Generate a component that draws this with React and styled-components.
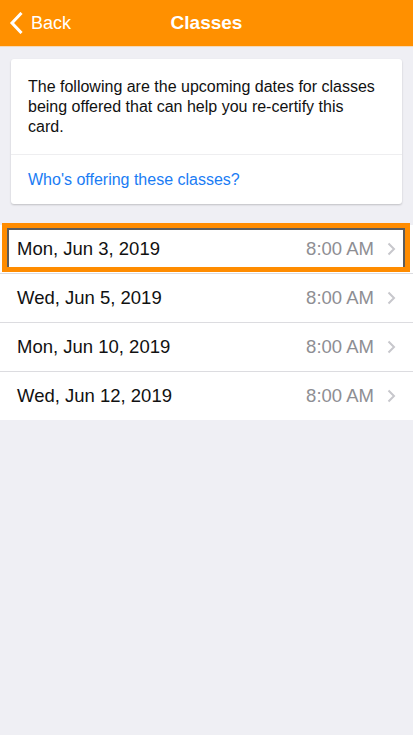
import styled, { createGlobalStyle } from "styled-components";

const classes = [
  { date: "Mon, Jun 3, 2019", time: "8:00 AM", highlighted: true },
  { date: "Wed, Jun 5, 2019", time: "8:00 AM" },
  { date: "Mon, Jun 10, 2019", time: "8:00 AM" },
  { date: "Wed, Jun 12, 2019", time: "8:00 AM" },
];

export default function App() {
  return (
    <>
      <GlobalStyle />
      <Screen>
        <NavBar>
          <BackButton>
            <svg width="14" height="22" viewBox="0 0 14 22">
              <path
                d="M11.5 2 L3 11 L11.5 20"
                fill="none"
                stroke="#fff"
                strokeWidth="3"
                strokeLinecap="square"
              />
            </svg>
            Back
          </BackButton>
          <Title>Classes</Title>
        </NavBar>

        <Card>
          <CardText>
            The following are the upcoming dates for classes being offered that
            can help you re-certify this card.
          </CardText>
          <CardLink>Who's offering these classes?</CardLink>
        </Card>

        <List>
          {classes.map((c) => (
            <Row key={c.date} $highlighted={c.highlighted}>
              <DateText>{c.date}</DateText>
              <TimeText>{c.time}</TimeText>
              <svg width="9" height="14" viewBox="0 0 9 14">
                <path
                  d="M1.5 1.5 L7 7 L1.5 12.5"
                  fill="none"
                  stroke="#c7c7cc"
                  strokeWidth="2"
                />
              </svg>
            </Row>
          ))}
        </List>
      </Screen>
    </>
  );
}

const GlobalStyle = createGlobalStyle`
  html, body {
    margin: 0;
    padding: 0;
    background: #efeff4;
  }
  body {
    font-family: "Liberation Sans", Arial, sans-serif;
  }
`;

const Screen = styled.div`
  width: 413px;
  min-height: 735px;
  background: #efeff4;
`;

const NavBar = styled.header`
  position: relative;
  height: 47px;
  background: #ff9000;
  display: flex;
  align-items: center;
  justify-content: center;
  border-bottom: 1px solid #f4d9b8;
  box-sizing: border-box;
`;

const BackButton = styled.div`
  position: absolute;
  left: 9px;
  top: 0;
  bottom: 0;
  display: flex;
  align-items: center;
  gap: 8px;
  color: #fff;
  font-size: 18px;
`;

const Title = styled.h1`
  margin: 0;
  color: #fff;
  font-size: 19px;
  font-weight: 700;
`;

const Card = styled.section`
  margin: 12px 11px 0;
  background: #fff;
  border-radius: 3px;
  box-shadow: 0 1px 2px rgba(0, 0, 0, 0.2);
`;

const CardText = styled.p`
  margin: 0;
  padding: 18px 24px 17px 17px;
  font-size: 16px;
  line-height: 20px;
  color: #111;
  border-bottom: 1px solid #eeeef0;
`;

const CardLink = styled.div`
  height: 49px;
  display: flex;
  align-items: center;
  padding: 0 17px;
  font-size: 16px;
  color: #1a7cf4;
`;

const List = styled.div`
  margin-top: 21px;
  background: #fff;
`;

const Row = styled.div`
  position: relative;
  height: 49px;
  box-sizing: border-box;
  display: flex;
  align-items: center;
  padding: 0 17px;
  gap: 13px;
  border-bottom: 1px solid #dcdce0;

  &:last-child {
    height: 48px;
    border-bottom: none;
  }

  ${(p) =>
    p.$highlighted &&
    `
    &::after {
      content: "";
      position: absolute;
      left: 2px;
      right: 3px;
      top: -2px;
      bottom: 1px;
      border: 5px solid #ff8c00;
      box-shadow: inset 2px 2px 0 #5c5c5c, inset -2px 0 0 #5c5c5c;
    }
  `}
`;

const DateText = styled.span`
  flex: 1;
  font-size: 18.5px;
  color: #111;
`;

const TimeText = styled.span`
  font-size: 18.5px;
  color: #8e8e93;
`;
